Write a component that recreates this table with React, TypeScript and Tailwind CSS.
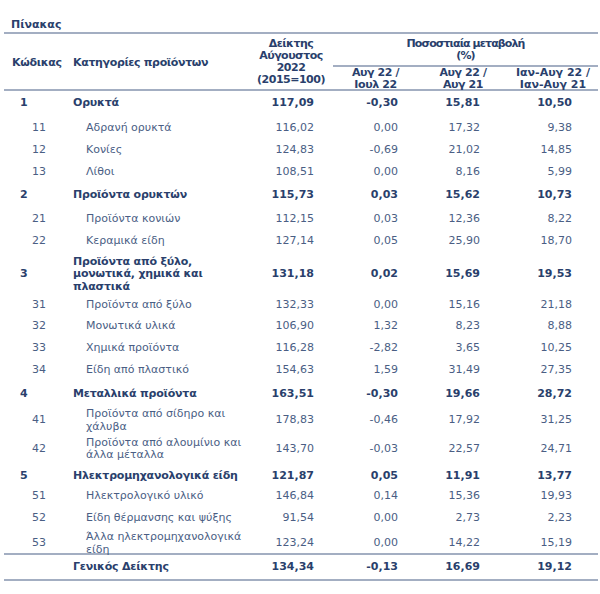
import React from "react";

type Row = {
  code: string;
  name: React.ReactNode;
  idx: string;
  a: string;
  b: string;
  c: string;
  bold?: boolean;
  h: string;
};

const rows: Row[] = [
  { code: "1", name: "Ορυκτά", idx: "117,09", a: "-0,30", b: "15,81", c: "10,50", bold: true, h: "h-[23px] pt-[2px]" },
  { code: "11", name: "Αδρανή ορυκτά", idx: "116,02", a: "0,00", b: "17,32", c: "9,38", h: "h-[23px] pt-[5px]" },
  { code: "12", name: "Κονίες", idx: "124,83", a: "-0,69", b: "21,02", c: "14,85", h: "h-[22px] pt-[4px]" },
  { code: "13", name: "Λίθοι", idx: "108,51", a: "0,00", b: "8,16", c: "5,99", h: "h-[22px] pt-[4px]" },
  { code: "2", name: "Προϊόντα ορυκτών", idx: "115,73", a: "0,03", b: "15,62", c: "10,73", bold: true, h: "h-[25px] pt-[4px]" },
  { code: "21", name: "Προϊόντα κονιών", idx: "112,15", a: "0,03", b: "12,36", c: "8,22", h: "h-[23px] pt-[4px]" },
  { code: "22", name: "Κεραμικά είδη", idx: "127,14", a: "0,05", b: "25,90", c: "18,70", h: "h-[21px] pt-[4px]" },
  {
    code: "3",
    name: (
      <>
        Προϊόντα από ξύλο,
        <br />
        μονωτικά, χημικά και
        <br />
        πλαστικά
      </>
    ),
    idx: "131,18",
    a: "0,02",
    b: "15,69",
    c: "19,53",
    bold: true,
    h: "h-[44px] pt-[5px]",
  },
  { code: "31", name: "Προϊόντα από ξύλο", idx: "132,33", a: "0,00", b: "15,16", c: "21,18", h: "h-[19px] pt-[4px]" },
  { code: "32", name: "Μονωτικά υλικά", idx: "106,90", a: "1,32", b: "8,23", c: "8,88", h: "h-[22px] pt-[4px]" },
  { code: "33", name: "Χημικά προϊόντα", idx: "116,28", a: "-2,82", b: "3,65", c: "10,25", h: "h-[22px] pt-[5px]" },
  { code: "34", name: "Είδη από πλαστικό", idx: "154,63", a: "1,59", b: "31,49", c: "27,35", h: "h-[23px] pt-[4px]" },
  { code: "4", name: "Μεταλλικά προϊόντα", idx: "163,51", a: "-0,30", b: "19,66", c: "28,72", bold: true, h: "h-[24px] pt-[5px]" },
  {
    code: "41",
    name: (
      <>
        Προϊόντα από σίδηρο και
        <br />
        χάλυβα
      </>
    ),
    idx: "178,83",
    a: "-0,46",
    b: "17,92",
    c: "31,25",
    h: "h-[26px] pt-[4px]",
  },
  {
    code: "42",
    name: (
      <>
        Προϊόντα από αλουμίνιο και
        <br />
        άλλα μέταλλα
      </>
    ),
    idx: "143,70",
    a: "-0,03",
    b: "22,57",
    c: "24,71",
    h: "h-[33px] pt-[5px]",
  },
  { code: "5", name: "Ηλεκτρομηχανολογικά είδη", idx: "121,87", a: "0,05", b: "11,91", c: "13,77", bold: true, h: "h-[21px] pt-[5px]" },
  { code: "51", name: "Ηλεκτρολογικό υλικό", idx: "146,84", a: "0,14", b: "15,36", c: "19,93", h: "h-[21px] pt-[4px]" },
  { code: "52", name: "Είδη θέρμανσης και ψύξης", idx: "91,54", a: "0,00", b: "2,73", c: "2,23", h: "h-[22px] pt-[4px]" },
  {
    code: "53",
    name: (
      <>
        Άλλα ηλεκτρομηχανολογικά
        <br />
        είδη
      </>
    ),
    idx: "123,24",
    a: "0,00",
    b: "14,22",
    c: "15,19",
    h: "h-[26px] pt-[4px]",
  },
];

const cols = "grid grid-cols-[64px_181px_84px_85px_90px_90px]";

function DataRow({ r }: { r: Row }) {
  const weight = r.bold ? "font-bold text-[#2a3f6c]" : "font-normal text-[#4a5e84]";
  return (
    <div className={`${cols} ${r.h} items-center ${weight}`}>
      <div className={r.bold ? "pl-[16px]" : "pl-[28px]"}>{r.code}</div>
      <div className={`${r.bold ? "pl-[5px] tracking-[-0.2px]" : "pl-[18px]"} whitespace-nowrap`}>{r.name}</div>
      <div className="text-right pr-[19px]">{r.idx}</div>
      <div className="text-right pr-[20px]">{r.a}</div>
      <div className="text-right pr-[28px]">{r.b}</div>
      <div className="text-right pr-[26px]">{r.c}</div>
    </div>
  );
}

export default function App() {
  return (
    <div
      className="w-[600px] h-[594px] bg-white text-[11px] leading-[12.5px] text-[#2a3f6c]"
      style={{ fontFamily: '"DejaVu Sans", Verdana, sans-serif' }}
    >
      <div className="pl-[11px] pt-[19px] h-[32px] font-bold">Πίνακας</div>
      <div className="ml-[4px] w-[594px]">
        <div className="h-[2px] bg-[#a3aec2]" />
        <div className={`${cols} grid-rows-[31px_2px_22px] font-bold leading-[12px] text-[#2a3f6c]`}>
          <div className="row-span-3 flex items-center pl-[8px] pt-[2px] tracking-[-0.3px]">Κώδικας</div>
          <div className="row-span-3 flex items-center pl-[5px] pt-[2px] tracking-[-0.35px]">Κατηγορίες προϊόντων</div>
          <div className="row-span-3 flex items-center justify-center text-center pt-[1px] tracking-[-0.5px]">
            Δείκτης
            <br />
            Αύγουστος
            <br />
            2022
            <br />
            (2015=100)
          </div>
          <div className="col-span-3 flex items-center justify-center text-center tracking-[-0.9px]">
            Ποσοστιαία μεταβολή
            <br />
            (%)
          </div>
          <div className="col-span-3 bg-[#a3aec2]" />
          <div className="flex items-center justify-center text-center pt-[2px] tracking-[-0.4px]">
            Αυγ 22 /
            <br />
            Ιουλ 22
          </div>
          <div className="flex items-center justify-center text-center pt-[2px] tracking-[-0.4px]">
            Αυγ 22 /
            <br />
            Αυγ 21
          </div>
          <div className="flex items-center justify-center text-center pt-[2px]">
            Ιαν-Αυγ 22 /
            <br />
            Ιαν-Αυγ 21
          </div>
        </div>
        <div className="h-[2px] bg-[#a3aec2]" />
        {rows.map((r) => (
          <DataRow key={r.code} r={r} />
        ))}
        <div className="h-[2px] bg-[#a3aec2]" />
        <div className={`${cols} h-[24px] items-center font-bold text-[#2a3f6c]`}>
          <div />
          <div className="pl-[5px] tracking-[-0.2px]">Γενικός Δείκτης</div>
          <div className="text-right pr-[19px]">134,34</div>
          <div className="text-right pr-[20px]">-0,13</div>
          <div className="text-right pr-[28px]">16,69</div>
          <div className="text-right pr-[26px]">19,12</div>
        </div>
        <div className="h-[2px] bg-[#a3aec2]" />
      </div>
    </div>
  );
}
